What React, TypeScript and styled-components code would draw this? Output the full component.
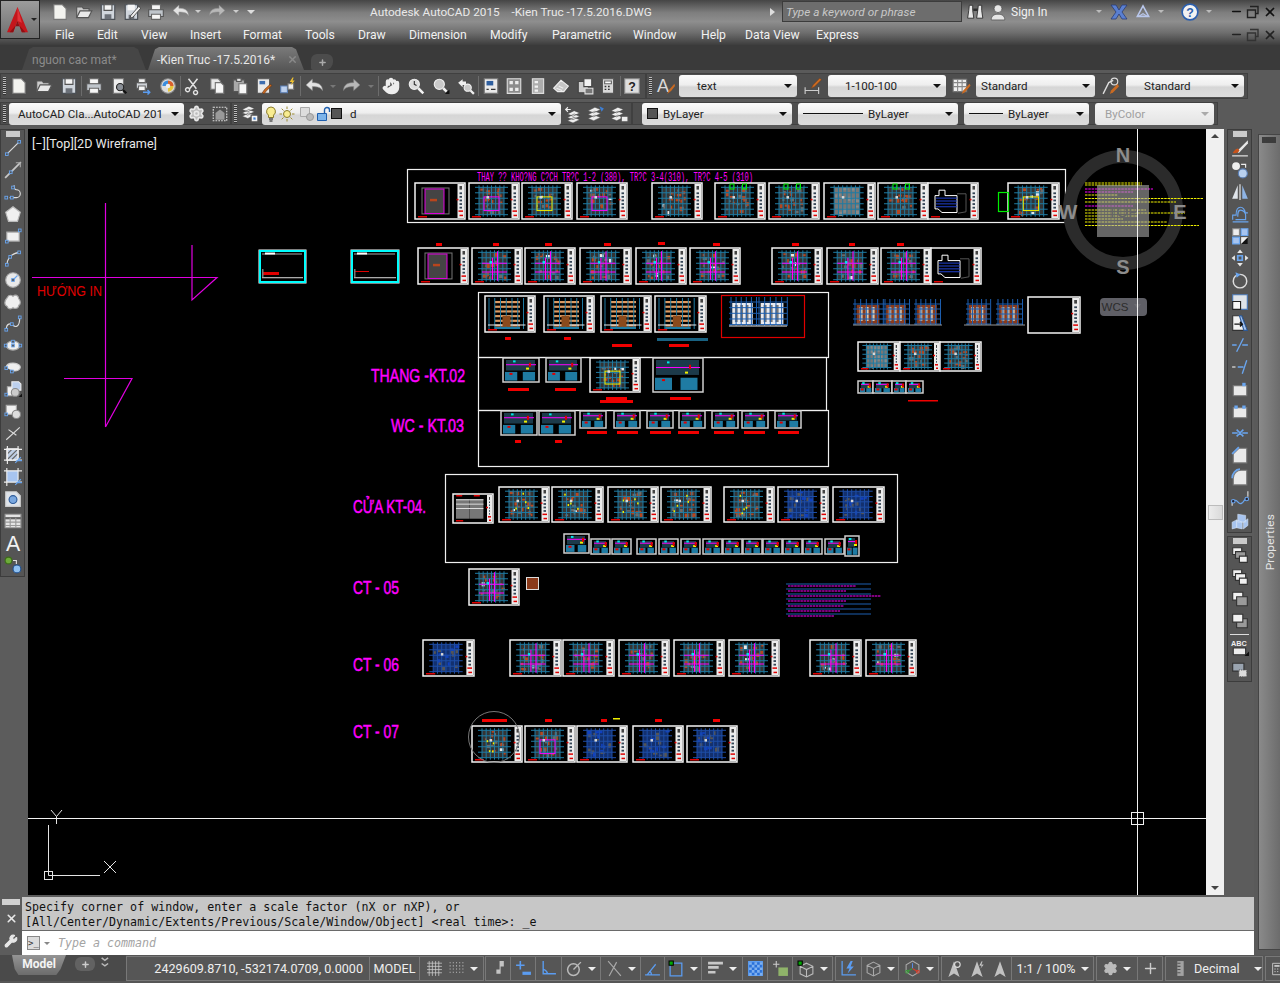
import React from "react";
import styled, { createGlobalStyle } from "styled-components";
import { Hand, X as XIcon, Plus, Settings, Wrench, Minus } from "lucide-react";

const GlobalStyle = createGlobalStyle`
  html, body { margin: 0; padding: 0; background: #555; }
  body { font-family: Roboto, "Liberation Sans", sans-serif; }
`;

const Page = styled.div`
  width: 1280px;
  height: 983px;
  overflow: hidden;
  display: flex;
  flex-direction: column;
  background: #5a5a5a;
  color: #eee;
`;

/* ---------- title bar ---------- */
const Header = styled.header`
  height: 45px;
  display: flex;
  background: linear-gradient(#454545 0%, #7e7e7e 28%, #8e8e8e 48%, #6f6f6f 72%, #3d3d3d 100%);
`;
const AppButton = styled.div`
  width: 40px;
  height: 39px;
  flex: none;
  display: flex;
  align-items: center;
  background: linear-gradient(#9c9c9c, #6f6f6f);
  border: 1px solid #222;
  box-sizing: border-box;
  padding-left: 4px;
  gap: 1px;
`;
const HeaderColumn = styled.div`
  flex: 1;
  display: flex;
  flex-direction: column;
`;
const TitleRow = styled.div`
  height: 23px;
  display: flex;
  align-items: center;
`;
const Qat = styled.div`
  width: 330px;
  padding-left: 8px;
  box-sizing: border-box;
  display: flex;
  align-items: center;
  flex: none;
`;
const QatButton = styled.span<{ $w?: number }>`
  width: ${(p) => p.$w ?? 24}px;
  display: flex;
  justify-content: center;
  flex: none;
`;
const TitleText = styled.div`
  width: 400px;
  flex: none;
  font-size: 11.8px;
  color: #e9e9e9;
  white-space: pre;
`;
const SearchArrow = styled.span`
  width: 12px;
  flex: none;
  display: flex;
  justify-content: flex-start;
  border-left: 5px solid #ddd;
  border-top: 4px solid transparent;
  border-bottom: 4px solid transparent;
  box-sizing: border-box;
  height: 8px;
`;
const SearchBox = styled.div`
  width: 180px;
  height: 21px;
  flex: none;
  box-sizing: border-box;
  border: 1px solid #3c3c3c;
  background: #6d6d6d;
  color: #c8c8c8;
  font: italic 11.8px Roboto, sans-serif;
  padding: 3px 3px;
`;
const SignIn = styled.span`
  font-size: 12px;
  color: #f0f0f0;
  width: 80px;
  flex: none;
`;
const Spacer = styled.span<{ $w: number }>`
  width: ${(p) => p.$w}px;
  flex: none;
`;
const Caret = styled.span<{ $color?: string; $size?: number }>`
  flex: none;
  width: 0;
  height: 0;
  border-left: ${(p) => p.$size ?? 3}px solid transparent;
  border-right: ${(p) => p.$size ?? 3}px solid transparent;
  border-top: ${(p) => p.$size ?? 3}px solid ${(p) => p.$color ?? "#ccc"};
`;
const WindowControls = styled.div`
  display: flex;
  align-items: center;
  justify-content: space-between;
  width: 47px;
  flex: none;
  margin-left: auto;
`;
const MenuRow = styled.nav`
  height: 22px;
  padding-top: 1px;
  box-sizing: border-box;
  display: flex;
  align-items: center;
`;
const MenuItem = styled.span<{ $w: number; $first?: boolean }>`
  width: ${(p) => p.$w}px;
  flex: none;
  font-size: 12.2px;
  color: #f1f1f1;
  margin-left: ${(p) => (p.$first ? 15 : 0)}px;
`;

/* ---------- file tabs ---------- */
const TabBar = styled.div`
  height: 25px;
  background: #3a3a3a;
  display: flex;
  align-items: flex-end;
  padding-left: 22px;
  gap: 2px;
`;
const Tab = styled.div<{ $active?: boolean; $w: number }>`
  width: ${(p) => p.$w}px;
  height: 23px;
  box-sizing: border-box;
  padding-top: 2px;
  clip-path: polygon(0 100%, 7px 10%, 11px 0, calc(100% - 12px) 0, calc(100% - 8px) 10%, 100% 100%);
  display: flex;
  align-items: center;
  padding-left: ${(p) => (p.$active ? 9 : 10)}px;
  font-size: 12px;
  color: ${(p) => (p.$active ? "#e8e8e8" : "#8b8b8b")};
  background: ${(p) => (p.$active ? "linear-gradient(#7a7a7a, #565656)" : "#464646")};
`;
const TabClose = styled.span`
  margin-left: 12px;
  display: flex;
  color: #8a8a8a;
`;
const NewTab = styled.div`
  width: 22px;
  height: 16px;
  margin-left: 5px;
  display: flex;
  align-items: center;
  justify-content: center;
  border-radius: 6px 6px 8px 2px;
  background: #4c4c4c;
  color: #aaa;
`;

/* ---------- toolbars ---------- */
const ToolRow = styled.div<{ $h: number; $pt: number; $pb: number }>`
  height: ${(p) => p.$h}px;
  width: 1280px;
  box-sizing: border-box;
  display: flex;
  align-items: stretch;
  padding: ${(p) => p.$pt}px 0 ${(p) => p.$pb}px 0;
`;
const Toolbar = styled.div<{ $w: number }>`
  width: ${(p) => p.$w}px;
  flex: none;
  display: flex;
  align-items: center;
  background: #4e4e4e;
  border: 1px solid #404040;
  box-sizing: border-box;
`;
const Grip = styled.span`
  width: 3px;
  height: 18px;
  margin: 0 1px 0 2px;
  flex: none;
  background: repeating-linear-gradient(#bbb 0 1px, #333 1px 2px);
`;
const ToolGroup = styled.div<{ $w: number; $plain?: boolean }>`
  width: ${(p) => p.$w}px;
  flex: none;
  height: 20px;
  box-sizing: border-box;
  display: flex;
  align-items: center;
  justify-content: space-around;
  border-right: ${(p) => (p.$plain ? "none" : "1px solid #6c6c6c")};
`;
const Combo = styled.div<{ $w: number; $h?: number; $off?: boolean; $ml?: number; $tight?: boolean }>`
  width: ${(p) => p.$w}px;
  height: ${(p) => p.$h ?? 22}px;
  margin-left: ${(p) => p.$ml ?? 0}px;
  flex: none;
  box-sizing: border-box;
  display: flex;
  align-items: center;
  gap: ${(p) => (p.$tight ? 0 : 5)}px;
  padding: 0 5px 0 ${(p) => (p.$tight ? 1 : 5)}px;
  border-radius: 3px;
  font-size: 11.6px;
  white-space: nowrap;
  overflow: hidden;
  color: ${(p) => (p.$off ? "#a0a0a0" : "#222")};
  background: ${(p) => (p.$off ? "linear-gradient(#f5f5f5, #e4e4e4)" : "linear-gradient(#fbfbfb, #eeeeee 45%, #d6d6d6 55%, #dcdcdc)")};
`;
const ComboLabel = styled.span<{ $pad?: number }>`
  flex: 1;
  overflow: hidden;
  padding-left: ${(p) => p.$pad ?? 0}px;
`;
const ColorSwatch = styled.span`
  width: 9px;
  height: 9px;
  background: #555;
  border: 1px solid #111;
  flex: none;
`;
const LineSample = styled.span<{ $w: number }>`
  width: ${(p) => p.$w}px;
  height: 1px;
  background: #111;
  flex: none;
`;
const IconSlot = styled.span<{ $w: number }>`
  width: ${(p) => p.$w}px;
  flex: none;
  display: flex;
  justify-content: center;
  align-items: center;
`;

/* ---------- work area ---------- */
const Middle = styled.div`
  height: 826px;
  display: flex;
`;
const MainColumn = styled.div`
  width: 1254px;
  flex: none;
  display: flex;
  flex-direction: column;
`;
const Workspace = styled.div`
  height: 766px;
  display: flex;
`;
const SideStrip = styled.aside<{ $w: number; $left?: number }>`
  width: ${(p) => p.$w}px;
  flex: none;
  padding-left: ${(p) => p.$left ?? 0}px;
  box-sizing: border-box;
  background: #5c5c5c;
  display: flex;
  flex-direction: column;
`;
const DockToolbar = styled.div<{ $mt?: number }>`
  width: 25px;
  box-sizing: border-box;
  border: 1px solid #3c3c3c;
  background: #555;
  display: flex;
  flex-direction: column;
  align-items: center;
  margin-top: ${(p) => p.$mt ?? 0}px;
`;
const DockGrip = styled.span`
  width: 14px;
  height: 6px;
  margin: 1px 0 0;
  flex: none;
  background: radial-gradient(circle, #cfcfcf 0.7px, transparent 0.9px) 0 0 / 2px 2px;
`;
const DockButton = styled.span`
  height: 21.95px;
  width: 100%;
  flex: none;
  display: flex;
  align-items: center;
  justify-content: center;
`;
const DockRule = styled.span`
  width: 19px;
  height: 1px;
  margin: 2px 0;
  background: #ddd;
  flex: none;
`;
const CanvasFrame = styled.main`
  position: relative;
  width: 1178px;
  height: 766px;
  flex: none;
  background: #000;
`;
const CanvasSvg = styled.svg`
  display: block;
  width: 100%;
  height: 100%;
`;
const ViewLabel = styled.div`
  position: absolute;
  left: 4px;
  top: 7px;
  font-size: 12.6px;
  color: #e8e8e8;
`;
const Scrollbar = styled.div`
  width: 18px;
  flex: none;
  background: #f0f0f0;
  display: flex;
  flex-direction: column;
  align-items: center;
  justify-content: space-between;
  padding: 5px 0;
  box-sizing: border-box;
`;
const ScrollThumb = styled.span`
  width: 15px;
  height: 15px;
  box-sizing: border-box;
  border: 1px solid #bcbcbc;
  background: linear-gradient(90deg, #ececec, #dadada);
  margin-top: 1px;
`;
const ScrollUp = styled.span`
  width: 0;
  height: 0;
  border-left: 4px solid transparent;
  border-right: 4px solid transparent;
  border-bottom: 4px solid #444;
`;
const ScrollDown = styled(ScrollUp)`
  border-bottom: none;
  border-top: 4px solid #444;
`;
const PaletteBar = styled.div`
  width: 26px;
  flex: none;
  padding: 5px 0 5px 4px;
  box-sizing: border-box;
  background: #5a5a5a;
  display: flex;
`;
const Palette = styled.div`
  flex: 1;
  box-sizing: border-box;
  border: 1px solid #454545;
  border-right: none;
  background: linear-gradient(90deg, #8a8a8a, #6c6c6c);
  display: flex;
  align-items: center;
  justify-content: center;
  position: relative;
`;
const PaletteGrip = styled.span`
  position: absolute;
  top: 2px;
  left: 3px;
  width: 14px;
  height: 6px;
  background: radial-gradient(circle, #3a3a3a 0.7px, transparent 0.9px) 0 0 / 2px 2px;
`;
const PaletteTitle = styled.span`
  writing-mode: vertical-rl;
  transform: rotate(180deg);
  font-size: 11.8px;
  color: #e4e4e4;
  letter-spacing: 0.2px;
`;

/* ---------- command line ---------- */
const CommandLine = styled.section`
  height: 60px;
  display: flex;
  background: #5c5c5c;
  padding-top: 2px;
  box-sizing: border-box;
`;
const CommandRail = styled.div`
  width: 22px;
  flex: none;
  display: flex;
  flex-direction: column;
  align-items: center;
  color: #e8e8e8;
`;
const RailGrip = styled.span`
  width: 18px;
  height: 6px;
  margin-top: 2px;
  background: radial-gradient(circle, #d5d5d5 0.7px, transparent 0.9px) 0 0 / 2px 2px;
`;
const RailButton = styled.span<{ $top: number }>`
  margin-top: ${(p) => p.$top}px;
  display: flex;
`;
const CommandBody = styled.div`
  flex: 1;
  display: flex;
  flex-direction: column;
`;
const CommandHistory = styled.pre`
  margin: 0;
  height: 34px;
  padding: 3px 0 0 3px;
  box-sizing: border-box;
  flex: none;
  background: #c7c7c7;
  border-bottom: 1px solid #6a6a6a;
  font: 11.65px/15px "DejaVu Sans Mono", monospace;
  color: #111;
`;
const CommandInput = styled.div`
  flex: 1;
  background: #fff;
  display: flex;
  align-items: center;
  padding-left: 5px;
  gap: 4px;
`;
const PromptBox = styled.span`
  width: 13px;
  height: 14px;
  box-sizing: border-box;
  border: 1px solid #888;
  background: #dcdcdc;
  color: #333;
  font: 9px/12px "DejaVu Sans Mono", monospace;
  text-align: center;
`;
const CommandPlaceholder = styled.span`
  margin-left: 4px;
  font: italic 11.65px "DejaVu Sans Mono", monospace;
  color: #a4a4a4;
`;

/* ---------- status bar ---------- */
const StatusBar = styled.footer`
  height: 28px;
  display: flex;
  align-items: stretch;
  background: #565656;
  padding-bottom: 2px;
  box-sizing: border-box;
`;
const ModelArea = styled.div`
  width: 126px;
  flex: none;
  display: flex;
  align-items: flex-start;
  background: #4a4a4a;
`;
const ModelTab = styled.div`
  width: 54px;
  height: 20px;
  margin-left: 12px;
  flex: none;
  clip-path: polygon(0 0, 100% 0, 90% 70%, 82% 100%, 12% 100%, 5% 70%);
  background: linear-gradient(#949494, #6c6c6c);
  color: #f4f4f4;
  font-size: 12px;
  font-weight: 700;
  text-align: center;
  line-height: 19px;
`;
const ModelPlus = styled.span`
  width: 20px;
  height: 14px;
  margin: 2px 0 0 9px;
  border-radius: 6px;
  background: #626262;
  display: flex;
  align-items: center;
  justify-content: center;
  color: #ccc;
`;
const ModelMore = styled.span`
  margin: 2px 0 0 5px;
  display: flex;
`;
const StatusGroup = styled.div<{ $ml?: number }>`
  display: flex;
  margin-left: ${(p) => p.$ml ?? 0}px;
  margin-top: 1px;
  border: 1px solid #787878;
  box-sizing: border-box;
`;
const StatusCell = styled.div<{ $w: number; $right?: boolean; $pad?: number; $start?: number }>`
  width: ${(p) => p.$w}px;
  flex: none;
  box-sizing: border-box;
  display: flex;
  align-items: center;
  justify-content: ${(p) => (p.$right ? "flex-end" : p.$start ? "flex-start" : "center")};
  gap: 5px;
  padding-right: ${(p) => p.$pad ?? 0}px;
  padding-left: ${(p) => p.$start ?? 0}px;
  font-size: 12.6px;
  color: #eee;
  white-space: nowrap;
  & + & {
    border-left: 1px solid #787878;
  }
`;
const IconSvg = styled.svg`
  overflow: visible;
  flex: none;
`;

/* ---------- icons ---------- */
const W = "#ededed";
const G = "#b9b9b9";
const B = "#6aa5ee";
const D = "#3a3a3a";
const N = "#5b9cf0";

const dots = (pts: number[][]) =>
  pts.map(([x, y], i) => <rect key={i} x={x - 1.2} y={y - 1.2} width="2.4" height="2.4" fill="#555" stroke={B} strokeWidth=".8" />);

const ICONS: Record<string, React.ReactNode> = {
  new: <path d="M2.5 1.5h7.5l3.5 3.5v9.5h-11z" fill="#f3f3ef" stroke="#777" />,
  open: <><path d="M1.5 13V3.5h5l1 1.5h5V7" fill="#ccc" stroke="#555" /><path d="M1.5 13l3-6h10.5l-3 6z" fill="#e9e9e9" stroke="#555" /></>,
  save: <><path d="M2 1.5h12v13H2z" fill="#cfd5dc" stroke="#4a4f55" /><path d="M4.5 1.5h7v5h-7z" fill="#f5f5f5" stroke="#555" /><path d="M5 10h6v4.5H5z" fill="#6b7078" /></>,
  saveas: <><path d="M2 1.5h11v13H2z" fill="#cfd5dc" stroke="#4a4f55" /><path d="M4 1.5h6.5v5H4z" fill="#f5f5f5" /><path d="M5 10.5h5v4H5z" fill="#6b7078" /><path d="M7 11l7-8 1.8 1.6-7 8-2.6 1z" fill="#eee" stroke="#333" strokeWidth=".7" /></>,
  plot: <><path d="M4 6V1.5h8V6" fill="#f6f6f6" stroke="#666" /><path d="M1.5 6h13v6h-13z" fill="#bfc5cb" stroke="#555" /><path d="M4 10h8v4.5H4z" fill="#f6f6f6" stroke="#666" /></>,
  preview: <><path d="M3 1.5h9v13H3z" fill="#eee" stroke="#777" /><circle cx="9" cy="9" r="3.2" fill="#8a8f96" stroke="#222" /><path d="M11.5 11.5l3 3" stroke="#111" strokeWidth="2" /></>,
  publish: <><path d="M2 5h10v5H2z" fill="#cfd3d8" stroke="#555" /><path d="M4 1.5h6V5H4zM4 8h6v4H4z" fill="#f5f5f5" stroke="#666" /><path d="M8 13.5h6m-2-2l2 2-2 2" stroke={N} fill="none" strokeWidth="1.3" /></>,
  print3d: <><circle cx="8" cy="8" r="6.5" fill="#dcdcdc" stroke="#888" /><path d="M8 3a5 5 0 0 1 5 5H8z" fill="#d8622c" /><path d="M3 8a5 5 0 0 1 5-5v5z" fill="#3a8dde" /><path d="M8 8h5a5 5 0 0 1-5 5z" fill="#e7c53a" /><circle cx="8" cy="8" r="2" fill="#eee" /></>,
  cut: <path d="M4 1.5l7 9M12 1.5l-7 9M4.5 12.5a1.8 1.8 0 1 0-.1.1zM11.5 12.5a1.8 1.8 0 1 0 .1.1z" stroke="#e4e4e4" strokeWidth="1.3" fill="none" />,
  copy: <><path d="M2.5 1.5h6.5l2 2V11h-8.500z" fill="#e8e8e8" stroke="#777" /><path d="M6.500 5h5l2.500 2.500v7h-7.500z" fill="#f7f7f7" stroke="#777" /></>,
  paste: <><path d="M2 2.500h10V13H2z" fill="#a9a9a9" stroke="#555" /><path d="M5 1h4v3H5z" fill="#ddd" stroke="#555" /><path d="M7 6h7v9H7z" fill="#f7f7f7" stroke="#777" /></>,
  match: <><path d="M2 1.500h11v13H2z" fill="#e9e9e9" stroke="#555" /><path d="M4 3.500h5v3H4z" fill="#3d6db0" /><path d="M15 7.500l-5 5-2 2.500-1.500-1 2-3 5-4.500z" fill="#c96a22" stroke="#5a2c10" strokeWidth=".5" /></>,
  blockq: <><path d="M1.500 8h6v6h-6z" fill="#bcd0ee" stroke="#5b7fb5" /><path d="M8 6h5v5H8z" fill="#eee" stroke="#777" /><path d="M12 .5l-2.500 4h2l-1 3 3.500-4.500h-2l1-2.500z" fill="#f0c230" /></>,
  undo: <path d="M1 7l5.500-5v3c5 0 9 1.500 9 7-1-2.500-4-3.500-9-3.500V12z" fill="#e3e3e3" stroke="#999" strokeWidth=".5" />,
  redo: <path d="M15 7L9.500 2v3c-5 0-9 1.500-9 7 1-2.500 4-3.500 9-3.500V12z" fill="#b8b8b8" stroke="#888" strokeWidth=".5" />,
  zoomrt: <><circle cx="6.500" cy="6.500" r="4.500" fill="#ddd" stroke="#eee" /><path d="M6.500 3.500v3l2 1" stroke="#333" fill="none" /><path d="M10 10l4.500 4.500" stroke="#f2f2f2" strokeWidth="2.200" /></>,
  zoomwin: <><circle cx="6.500" cy="6.500" r="4.500" fill="#c9c9c9" stroke="#eee" /><path d="M10 10l3 3" stroke="#f2f2f2" strokeWidth="2.200" /><path d="M11.500 15h4v-4z" fill="#111" /></>,
  zoomprev: <><path d="M1 5l4-3v2h3v3H5v2z" fill="#eee" /><circle cx="9.500" cy="9.500" r="3.200" fill="#c9c9c9" stroke="#eee" /><path d="M12 12l3 3" stroke="#eee" strokeWidth="2" /></>,
  propsp: <><path d="M2 1.500h12v13H2z" fill="#e9e9e9" stroke="#777" /><path d="M4 3.500h6v4H4z" fill="#2e5e9e" /><path d="M4 11h2M8 11h4" stroke="#333" /></>,
  design: <><path d="M2 1.500h12v13H2z" fill="#8c8c8c" stroke="#ddd" /><path d="M4 3.500h3v3H4zM9 3.500h3v3H9zM4 9.500h3v3H4zM9 9.500h3v3H9z" fill="#ececec" /></>,
  palette: <><path d="M3 1.500h10v13H3z" fill="#adadad" stroke="#ddd" /><path d="M5 3.500h3v2H5zM5 7.500h3v2H5zM5 11h3v2H5z" fill="#f1f1f1" /></>,
  sheet: <path d="M1.500 10L8 3l6.500 5-4 5H5zM4 10l5 2M6 8l4 2" fill="#c6c6c6" stroke="#eee" />,
  markup: <><path d="M2 4h9v10H2z" fill="#cfcfcf" stroke="#444" /><path d="M7 1.500h7v7H7z" fill="#f2f2f2" stroke="#444" /><path d="M8 10h7v5H8z" fill="#777" stroke="#ddd" /></>,
  calc: <><path d="M3 1.500h10v13H3z" fill="#d9d9d9" stroke="#555" /><path d="M5 3.500h6v2.500H5z" fill="#fff" stroke="#666" /><path d="M5 8.500h1.500M8 8.500h1.500M5 11h1.500M8 11h1.500" stroke="#333" strokeWidth="1.300" /></>,
  help: <><path d="M1.500 1.500h13v13h-13z" fill="#dedede" stroke="#888" /><text x="8" y="12.500" textAnchor="middle" fontSize="11" fontWeight="700" fontFamily="Liberation Sans" fill="#222">?</text></>,
  textstyle: <><text x="0" y="13" fontSize="16" fontFamily="Liberation Sans" fill="#d9d9d9">A</text><path d="M15.500 6L11 11l-2 4 3.500-2.500L16 8z" fill="#c96a22" /></>,
  dimstyle: <><path d="M1 9v6M13 9v6M1 12h12" stroke="#ccc" /><path d="M14 1l-6 6-1.500 3 3-1.500 6-6z" fill="#c96a22" stroke="#7a3b12" strokeWidth=".4" /></>,
  tablestyle: <><path d="M1 2h12v11H1z" fill="#eee" stroke="#777" /><path d="M1 5h12M1 8.500h12M5 2v11M9 2v11" stroke="#888" /><path d="M15.500 6L10 12l-1.500 3 3-1.500 5-6z" fill="#c96a22" /></>,
  mlstyle: <><path d="M1 15l5-10 4-2" stroke="#ddd" fill="none" strokeWidth="1.200" /><circle cx="11" cy="4" r="3" fill="none" stroke="#ddd" /><path d="M14 6l-6 6-1 3 3-1.500 5-5z" fill="#c96a22" /></>,
  wslock: <><path d="M2 2h12v12H2z" fill="none" stroke="#ddd" strokeDasharray="1.500 1" /><path d="M4 13V7l4-3 4 3v6z" fill="#9a9a9a" /></>,
  layerprop: <><path d="M1 7l6-3 5 2-6 3zM1 10l6-3 5 2-6 3zM1 4l6-3 5 2-6 3z" fill="#eee" stroke="#444" strokeWidth=".5" /><path d="M9 9h6v6H9z" fill="#f2f2f2" stroke="#555" /><path d="M11 11h2v2h-2z" fill="#3d7fd6" /></>,
  bulb: <><path d="M8 1a4.500 4.500 0 0 0-2.500 8.200V11.500h5V9.200A4.500 4.500 0 0 0 8 1z" fill="#f8ec90" stroke="#8a7c2c" /><path d="M6 13h4M6.500 15h3" stroke="#555" strokeWidth="1.300" /></>,
  sun: <><circle cx="8" cy="8" r="3.500" fill="#f8ec90" stroke="#8a7c2c" /><path d="M8 .5v2.500M8 13v2.500M.5 8H3M13 8h2.500M2.700 2.700l1.800 1.800M11.500 11.500l1.800 1.800M13.300 2.700l-1.800 1.800M4.500 11.500l-1.800 1.800" stroke="#9c8c30" /></>,
  vpfreeze: <><path d="M1.500 1.500h9v9h-9z" fill="#ddd" stroke="#aaa" /><circle cx="11" cy="11" r="3.500" fill="#bbb" stroke="#999" /></>,
  lockopen: <><path d="M2.500 7.500h9v7h-9z" fill="#7db4ea" stroke="#1f5fae" /><path d="M9.500 7V4a2.500 2.500 0 0 1 5 0v2" fill="none" stroke="#1f5fae" strokeWidth="1.400" /></>,
  layerstate: <><path d="M1 5l6-3 5 2-6 3zM1 8.500l6-3 5 2-6 3zM1 12l6-3 5 2-6 3z" fill="#eee" stroke="#555" strokeWidth=".5" /><path d="M11 1l4 2-2 3z" fill="#3d7fd6" /></>,
  layerprev: <><path d="M3 8l6-3 5 2-6 3zM3 11l6-3 5 2-6 3zM3 14l6-3 5 2-6 3z" fill="#eee" stroke="#444" strokeWidth=".5" /><path d="M6 4H2m1.500-2L1.500 4l2 2" stroke="#eee" fill="none" /></>,
  layermatch: <><path d="M1 5l6-3 5 2-6 3zM1 8.500l6-3 5 2-6 3zM1 12l6-3 5 2-6 3z" fill="#eee" stroke="#444" strokeWidth=".5" /><path d="M10 10h6v5h-6z" fill="#eee" stroke="#555" /></>,
  /* left dock */
  line: <><path d="M2.500 13.500l11-11" stroke="#dcdcdc" />{dots([[2.500, 13.500], [13.500, 2.500]])}</>,
  xline: <><path d="M1 15L15 1" stroke="#c8c8c8" strokeWidth="1.500" />{dots([[6, 10]])}<path d="M14.500 1.500v4m0-4h-4" stroke="#aaa" /></>,
  pline: <><path d="M2 13h6a3.500 3.500 0 0 0 0-7c-2 0-2-2-2-4" fill="none" stroke="#dcdcdc" transform="translate(3 0)" />{dots([[2, 13], [7, 13], [8, 4]])}</>,
  polygon: <path d="M8 1.500l6.500 5-2.500 8H4l-2.500-8z" fill="#f0f0f0" stroke="#bbb" />,
  rect: <><path d="M2.500 4.500h11v8h-11z" fill="#f0f0f0" stroke="#aaa" />{dots([[2.500, 13], [14, 3]])}</>,
  arc: <><path d="M2.500 14C3 8 7 4 13.500 3" fill="none" stroke="#dcdcdc" />{dots([[2.500, 14], [5.500, 7], [13.500, 3]])}</>,
  circle: <><circle cx="8" cy="8" r="6.500" fill="#e9e9e9" stroke="#aaa" /><path d="M8 8l4-4" stroke={B} />{dots([[8, 8]])}</>,
  cloud: <path d="M3 4c1-3 4-2 5-1 2-2 5-1 5 2 2 2 2 5 0 6 0 3-4 3-5 2-2 2-5 1-5-1-3-1-3-5 0-8z" fill="#f0f0f0" stroke="#aaa" />,
  spline: <><path d="M2 14c0-6 4-6 6-4s6 2 6-7" fill="none" stroke="#dcdcdc" />{dots([[2, 14], [7, 9], [14, 3]])}</>,
  ellipse: <><ellipse cx="8" cy="8.500" rx="6" ry="4" fill="#eee" stroke="#aaa" />{dots([[1.500, 8.500], [8, 5], [14.500, 8.500], [8, 8.500]])}</>,
  ellarc: <><path d="M2 8.500c0-3.500 4-4 6-4s6.500 1 6.500 3.500-3 3.500-5 3.500-3-.5-4-1" fill="#eee" stroke="#ccc" />{dots([[2, 9], [7, 12]])}</>,
  insert: <><path d="M3 6h8v8H3z" fill="#f2f2f2" stroke="#aaa" /><path d="M7 1.500h6l2 2V9H7z" fill="#bcd0ee" stroke="#eee" /><circle cx="10" cy="11" r="3.500" fill="#ccc" stroke="#888" /><path d="M13 15h3v-3z" fill="#111" />{dots([[2, 13]])}</>,
  makeblock: <><path d="M2 3h9v8H2z" fill="#f0f0f0" stroke="#aaa" /><circle cx="11" cy="11" r="3.700" fill="#ddd" stroke="#888" />{dots([[2, 11]])}</>,
  point: <path d="M2 14L14 3M4 5l7 5" stroke="#dcdcdc" />,
  hatch: <><path d="M2.500 2.500h10v10h-10z" fill="#bfcfe6" stroke="#eee" /><path d="M3 7l4-4M3 12l9-9M7 12l5-5" stroke="#666" /><path d="M0 3h16M3 0v16M0 12.500h16M12.500 0v11" stroke="#eee" /><path d="M10 15l5-5M11 13h5" stroke={B} /></>,
  gradient: <><path d="M2.500 2.500h10v10h-10z" fill="#a7c4ef" /><path d="M0 2.500h16M2.500 0v16M0 12.500h16M12.500 0v11" stroke="#eee" /><path d="M10 15l5-5M11 13h5" stroke={B} /></>,
  region: <><path d="M1.500 1.500H11l3.500 3.500v9.500h-13z" fill="#dfe4ea" stroke="#ccc" /><circle cx="8" cy="8.500" r="3.500" fill="#7aa8e0" stroke="#2d5b9a" /></>,
  table: <><path d="M1 2h14v12H1z" fill="#e4e4e4" stroke="#999" /><path d="M1 5.500h14" stroke="#666" strokeWidth="2" /><path d="M1 9h14M1 12h14M5.500 5v9M10.500 5v9" stroke="#999" /></>,
  mtext: <text x="8" y="15" textAnchor="middle" fontSize="19" fontFamily="Liberation Sans" fill="#f2f2f2">A</text>,
  addsel: <><circle cx="4" cy="4" r="3" fill="#6dab3a" stroke="#3e6c1a" /><path d="M8 4h3v3" stroke="#ddd" fill="none" /><circle cx="11.500" cy="11.500" r="3.500" fill="#8fc0f0" stroke="#1f4f8e" /></>,
  /* right dock */
  erase: <><path d="M15 1L7 9l-2 2 2 1.500L15 4z" fill="#e7e7e7" /><path d="M6 8.500c-2 0-3 2-4.500 4 3 .5 5 0 6-2.500z" fill="#c9531a" /><path d="M1 15h14" stroke="#eee" /></>,
  copyobj: <><circle cx="4.500" cy="4.500" r="3.500" fill="#eee" /><circle cx="10.500" cy="11" r="4" fill="#b9d0ee" stroke="#5b7fb5" /><path d="M9 3h4v3" stroke="#eee" fill="none" /></>,
  mirror: <><path d="M1 14l5-12v12z" fill="#dfe4ea" /><path d="M15 14L10 2v12z" fill="#8fb4e4" /><path d="M8 1v14" stroke="#eee" /></>,
  offset: <path d="M1.500 13V9h3c0-5 2-7 4-7s4 2 4 5h2.500M1.500 15h14M4 13h9V9c0-2-2-4.500-4.500-4.500S6 7 6 10.500" fill="none" stroke={B} />,
  array: <><path d="M1.500 1.500h6v6h-6z" fill="#eee" stroke="#888" /><path d="M9 1.500h6v6H9zM1.500 9h6v6h-6z" fill="#a7c4ef" stroke={B} /><path d="M9 9h6v6H9z" fill="#eee" /><path d="M9 15l6-6v6z" fill="#111" /></>,
  move: <><path d="M8 .5l2.500 3h-5zM8 15.500l2.500-3h-5zM.5 8l3-2.500v5zM15.500 8l-3-2.500v5z" fill="#e7e7e7" /><path d="M6 6h4v4H6z" fill="none" stroke={B} strokeWidth="1.500" /></>,
  rotate: <><circle cx="8" cy="9" r="6" fill="none" stroke="#ddd" strokeWidth="1.300" /><path d="M4 1l4.500 2L5 6z" fill={B} /></>,
  scale: <><path d="M1.500 1.500h13v13h-13z" fill="#dfe4ea" stroke="#4a77b5" /><path d="M1.500 7.500h7v7h-7z" fill="#f7f7f7" stroke="#222" /></>,
  stretch: <><path d="M1.500 1.500h8l5 13h-13z" fill="#f1f1f1" stroke="#333" /><path d="M9.500 1.500l5 13-3 0-4-13z" fill="#a7c4ef" stroke="#2d5b9a" /><path d="M3 9h7m-2-2l2 2-2 2" stroke="#111" fill="none" strokeWidth="1.300" /></>,
  trim: <path d="M1 8h4M10 8h5M11 2L5 14" stroke={B} fill="none" strokeWidth="1.200" />,
  extend: <><path d="M1 8h3" stroke="#eee" /><path d="M6 8h5M14 2L10 14" stroke={B} fill="none" strokeWidth="1.200" /></>,
  breakp: <><path d="M2 5h12v9H2z" fill="#e9e9e9" stroke="#777" /><path d="M10 2.500h3v3h-3z" fill={B} /></>,
  breakat: <><path d="M2 5h12v9H2z" fill="#e9e9e9" stroke="#777" /><path d="M3 3h3v3H3zM10 3h3v3h-3z" fill={B} /></>,
  join: <path d="M1 8h5M10 8h5M5 5l3 3-3 3M11 5L8 8l3 3" stroke={B} strokeWidth="1.400" fill="none" />,
  chamfer: <><path d="M2 15V7l5-5h7v13z" fill="#e9e9e9" stroke="#777" /><path d="M1 7l6-6" stroke={B} strokeWidth="1.500" /></>,
  fillet: <><path d="M2 15V9c0-4 3-7 7-7h5v13z" fill="#e9e9e9" stroke="#777" /><path d="M1 9c0-4 3-8 7-8" stroke={B} strokeWidth="1.500" fill="none" /></>,
  blend: <><path d="M1 14V9M15 6V1" stroke="#ddd" /><path d="M2 11c3-5 4 2 7 1s2-4 5-4" stroke={B} strokeWidth="1.200" fill="none" /><circle cx="2" cy="10" r="1.600" fill="#223" stroke={B} /><circle cx="14" cy="8" r="1.600" fill="#223" stroke={B} /></>,
  explode: <><path d="M1 9l4-2v7l-4 1zM6 2l7 1v6l-7 0zM5 7l5 2v6l-5-1zM11 9l4-3v6l-4 3z" fill="#a7c4ef" stroke="#d8e6f7" strokeWidth=".5" /></>,
  ord1: <><path d="M1.500 1.500h8v6h-8z" fill="#f1f1f1" stroke="#333" /><path d="M4 5h9v6H4z" fill="#9a9a9a" stroke="#333" /><path d="M7.500 9h7v5.500h-7z" fill="#f1f1f1" stroke="#333" /></>,
  ord2: <><path d="M1.500 1.500h8v6h-8z" fill="#f1f1f1" stroke="#333" /><path d="M4 5h9v6H4z" fill="#f1f1f1" stroke="#333" /><path d="M7.500 9h7v5.500h-7z" fill="#f1f1f1" stroke="#333" /></>,
  ord3: <><path d="M1.500 2h9v7h-9z" fill="#f1f1f1" stroke="#333" /><path d="M5 6h9.500v8H5z" fill="#9a9a9a" stroke="#333" /></>,
  ord4: <><path d="M5 6h9.500v8H5z" fill="#9a9a9a" stroke="#333" /><path d="M1.500 2h9v7h-9z" fill="#f1f1f1" stroke="#333" /></>,
  textfront: <><text x="0" y="6.500" fontSize="6.500" fontWeight="700" fontFamily="Liberation Sans" fill="#eee">ABC</text><path d="M2 8h11v6H2z" fill="#eee" stroke="#333" /><path d="M12 15h4v-4z" fill="#111" /></>,
  hatchback: <><path d="M1.500 2h10v7h-10z" fill="#9aa4b0" stroke="#333" /><path d="M7 8h7v6H7z" fill="#ddd" stroke="#555" strokeDasharray="1 1" /></>,
  /* status bar */
  grid: <path d="M3 1v14M6 1v14M9 1v14M12 1v14M1 3h14M1 6h14M1 9h14M1 12h14" stroke="#cfcfcf" strokeWidth=".7" />,
  snap: <path d="M2 2v12M5 2v12M8 2v12M11 2v12M14 2v12" stroke="#bdbdbd" strokeDasharray="1 2" />,
  infer: <path d="M9 1h4v5h-3v7H6v-4h3z" fill="#c4c4c4" />,
  dyn: <><path d="M1 5h8M5 1v8" stroke={N} strokeWidth="1.500" /><path d="M7 11h8v3H7z" fill={N} /></>,
  ortho: <path d="M3 1v12h12M3 9c2 0 4 2 4 4" stroke={N} fill="none" strokeWidth="1.300" />,
  polar: <><circle cx="7" cy="9" r="5.500" fill="none" stroke="#bbb" strokeWidth="1.400" /><path d="M7 9l7-7" stroke="#bbb" strokeWidth="1.300" /></>,
  iso: <path d="M2 1l12 14M10 2L3 15" stroke="#a8a8a8" strokeWidth="1.100" />,
  isotrack: <path d="M1 14h14M11 4L3 14M7 14c0-2-1-3-2-3" stroke={N} strokeWidth="1.200" fill="none" />,
  osnap: <><path d="M2 3h11v12H2z" fill="none" stroke={N} strokeWidth="1.200" /><path d="M1 1h4v4H1z" fill="#0a0" stroke="#000" /></>,
  lweight: <path d="M1 3h14M1 7h10M1 11.500h7" stroke="#c8c8c8" strokeWidth="2.500" />,
  transp: <><path d="M1.500 1.500h13v13h-13z" fill="#2a70d8" stroke={N} /><path d="M2 2h2.500v2.500H2zM7 2h2.500v2.500H7zM12 2h2.500v2.500H12zM4.500 4.500H7V7H4.500zM9.500 4.500H12V7H9.500zM2 7h2.500v2.500H2zM7 7h2.500v2.500H7zM12 7h2.500v2.500H12zM4.500 9.500H7V12H4.500zM9.500 9.500H12V12H9.500zM2 12h2.500v2.500H2zM7 12h2.500v2.500H7zM12 12h2.500v2.500H12z" fill="#7fb0ee" /></>,
  cycle: <><path d="M1 4h6M4 1v6" stroke="#ccc" /><path d="M6 7h9v8H6z" fill="#8fb36a" /></>,
  snap3d: <><path d="M8 3l6 3v7l-6 3-6-3V6zM2 6l6 3 6-3M8 9v7" fill="none" stroke="#bcbcbc" /><path d="M0 1h4v4H0z" fill="#0a0" stroke="#000" /></>,
  ducs: <><path d="M2 1v13h13" stroke={N} fill="none" strokeWidth="1.200" /><path d="M10 1L6 8h3l-2 5 6-7h-3l2-5z" fill={N} /></>,
  cube: <path d="M8 2l6 3v7l-6 3-6-3V5zM2 5l6 3 6-3M8 8v7" fill="none" stroke="#a9a9a9" />,
  gizmo: <><path d="M8 1l6 3.500v7L8 15l-6-3.500v-7z" fill="none" stroke="#aaa" /><path d="M8 8V3" stroke="#5b8de0" /><path d="M8 8l-5 3" stroke="#3a9a3a" /><path d="M8 8l5 3" stroke="#d04030" /><circle cx="3" cy="11" r="1.400" fill="none" stroke="#3a9a3a" /><circle cx="13" cy="11" r="1.400" fill="none" stroke="#d04030" /></>,
  annoA: <><path d="M8 1L3 15l5-3 5 3z" fill="#c2c2c2" /><circle cx="11" cy="4" r="2.500" fill="#555" stroke="#ddd" /></>,
  annoB: <><path d="M8 1L3 15l5-3 5 3z" fill="#c2c2c2" /><path d="M12 1l-2 4h2l-1 3 3-4h-2l1-3z" fill="#ddd" stroke="#555" strokeWidth=".3" /></>,
  annoC: <path d="M8 1L3 15l5-3 5 3z" fill="#c2c2c2" />,
  ruler: <><path d="M5 1h6v14H5z" fill="#a2a2a2" /><path d="M5 3h3M5 6h3M5 9h3M5 12h3" stroke="#555" /></>,
  calcsm: <><path d="M3 1.500h10v13H3z" fill="none" stroke="#ccc" /><path d="M5 3.500h6v2H5z" fill="#ccc" /><path d="M5 8h1.500M8 8h1.500M5 11h1.500M8 11h1.500" stroke="#ccc" /></>,
  chevrons: <path d="M2 1l4 3 4-3M2 8l4 3 4-3" fill="none" stroke="#bbb" strokeWidth="1.800" />,
};

const Icon = ({ name, size = 18 }: { name: string; size?: number }) => (
  <IconSvg width={size} height={size} viewBox="0 0 16 16">{ICONS[name]}</IconSvg>
);

/* ---------- drawing content ---------- */
const rng = (seed: number) => {
  let s = Math.abs(Math.round(seed * 97)) % 233280;
  return () => {
    s = (s * 9301 + 49297) % 233280;
    return s / 233280;
  };
};

type Tone = "orange" | "magenta" | "blue" | "grey" | "green" | "pale" | "mix" | "empty" | "section" | "stair" | "tile" | "door" | "gate";

const TEAL = "#1f7ba3";
const ORANGE = "#b8451d";

const Sheet = ({ x0, x1, y0, y1, tone = "mix" }: { x0: number; x1: number; y0: number; y1: number; tone?: Tone }) => {
  const w = x1 - x0;
  const h = y1 - y0;
  const r = rng(x0 + y0 * 3);
  const tb = Math.max(w * 0.15, 3);
  const tbx = x1 - tb;
  const bx = x0 + w * 0.2;
  const bw = w * 0.5;
  const by = y0 + h * 0.12;
  const bh = h * 0.76;
  const blocks = Array.from({ length: 16 }, () => [bx + r() * bw * 0.9, by + r() * bh * 0.9, 1.5 + r() * 3, 1.5 + r() * 3, r()]);
  const isPlan = !["empty", "section", "stair", "tile", "door", "gate"].includes(tone);
  const lineColor = tone === "blue" ? "#1e4ea8" : TEAL;
  return (
    <g>
      <rect x={x0} y={y0} width={w} height={h} fill="#000" stroke={tone === "tile" ? "#cfcfcf" : "#f4f4f4"} strokeWidth="1.500" />
      {tone !== "tile" && (
        <g>
          <rect x={tbx} y={y0 + 1} width={tb - 1} height={h - 2} fill="#ececec" />
          <rect x={tbx + 2} y={y0 + 3} width={tb - 5} height={h * 0.1} fill="#444" />
          {[0.26, 0.36, 0.46, 0.56, 0.66].map((f) => (
            <rect key={f} x={tbx + 2} y={y0 + h * f} width={tb - 5} height={h * 0.05} fill="#345" />
          ))}
          <rect x={tbx + 1} y={y0 + h * 0.76} width={tb - 3} height="1.500" fill="#e00000" />
          <rect x={tbx + 2} y={y0 + h * 0.88} width={tb - 4} height="1.500" fill="#e00000" />
          <rect x={tbx - 1} y={y0 + h * 0.44} width="2" height="1.500" fill="#e00000" />
        </g>
      )}
      {isPlan && (
        <g>
          <rect x={bx} y={by} width={bw} height={bh} fill={tone === "grey" ? "#777" : tone === "blue" ? "#13306e" : "#343434"} />
          {blocks.map(([a, b, c, d, e], i) => (
            <rect key={i} x={a} y={b} width={c} height={d} fill={tone === "blue" ? (e > 0.5 ? "#1040c0" : "#555") : tone === "grey" ? "#888" : e > 0.7 ? "#6a6a6a" : e > 0.06 ? ORANGE : "#e8e8e8"} />
          ))}
          {[0, 1, 2, 3, 4, 5, 6].map((i) => (
            <line key={i} x1={bx + (i * bw) / 6} x2={bx + (i * bw) / 6} y1={by - 2} y2={by + bh + 2} stroke={lineColor} strokeWidth="1" />
          ))}
          {[0, 1, 2, 3, 4, 5].map((i) => (
            <line key={i} x1={bx - 4} x2={bx + bw + 4} y1={by + (i * bh) / 5} y2={by + (i * bh) / 5} stroke={lineColor} strokeWidth="1" />
          ))}
          {tone === "magenta" && (
            <path d={`M${bx + bw * 0.62} ${by - 1}V${by + bh + 1}M${bx + bw * 0.42} ${by + bh * 0.2}V${by + bh}M${bx} ${by + bh * 0.4}H${bx + bw}M${bx} ${by + bh * 0.72}H${bx + bw}`} stroke="#ff00ff" strokeWidth="1.100" fill="none" />
          )}
          {tone === "green" && (
            <g stroke="#00ee00" strokeWidth="1" fill="none">
              <rect x={bx + bw * 0.2} y={y0 + 1} width="4" height="5" />
              <rect x={bx + bw * 0.7} y={y0 + 1} width="4" height="5" />
            </g>
          )}
          {tone === "mix" && <rect x={bx + bw * 0.2} y={by + bh * 0.35} width={bw * 0.6} height={bh * 0.5} fill="none" stroke={x0 % 2 ? "#ff00ff" : "#f0f000"} strokeWidth="1" />}
          {tone === "pale" && [0, 1, 2, 3].map((i) => <rect key={i} x={bx + r() * bw * 0.8} y={by + r() * bh * 0.8} width="1.500" height="2" fill="#f0f000" />)}
          <rect x={bx + bw * 0.3} y={by + bh * 0.32} width="2.500" height="2.500" fill={tone === "magenta" ? "#00e8e8" : "#d8d8d8"} />
        </g>
      )}
      {tone === "gate" && (
        <g>
          <rect x={x0 + 7} y={y0 + 5} width={w * 0.54} height={h * 0.72} fill="none" stroke="#777" />
          <rect x={x0 + w * 0.2} y={y0 + 6} width={w * 0.38} height={h * 0.68} fill="#444" stroke="#e000e0" />
          <rect x={x0 + w * 0.3} y={y0 + h * 0.44} width={w * 0.14} height="2.500" fill="#b8451d" />
        </g>
      )}
      {tone === "section" && (
        <g>
          {[0, 1, 2, 3, 4, 5].map((i) => (
            <rect key={i} x={x0 + w * 0.2} y={y0 + 5 + i * (h * 0.13)} width={w * 0.5} height={h * 0.06} fill="#dc9a62" />
          ))}
          {[0, 1, 2, 3, 4, 5, 6].map((i) => (
            <line key={i} x1={x0 + 4 + i * (w * 0.115)} x2={x0 + 4 + i * (w * 0.115)} y1={y0 + 2} y2={y1 - 3} stroke={TEAL} />
          ))}
          <line x1={x0 + 3} x2={tbx - 2} y1={y1 - 7} y2={y1 - 7} stroke="#e8e8e8" />
          <rect x={x0 + w * 0.2} y={y1 - 5} width={w * 0.5} height="2" fill={TEAL} />
          <rect x={x0 + w * 0.35} y={y0 + h * 0.55} width={w * 0.16} height={h * 0.3} fill="#8a4a1c" />
        </g>
      )}
      {tone === "stair" && (
        <g>
          <path d={`M${x0 + 7} ${y0 + h * 0.35}H${x0 + w * 0.22}V${y0 + h * 0.2}H${x0 + w * 0.34}V${y0 + h * 0.35}H${x0 + w * 0.58}V${y0 + h * 0.82}H${x0 + w * 0.28}L${x0 + w * 0.2} ${y0 + h * 0.72}H${x0 + 7}z`} fill="none" stroke="#fff" strokeWidth="1" />
          {[0.42, 0.5, 0.58, 0.66].map((f) => (
            <line key={f} x1={x0 + 8} x2={x0 + w * 0.58} y1={y0 + h * f} y2={y0 + h * f} stroke="#2040d0" />
          ))}
          <path d={`M${x0 + w * 0.58} ${y0 + h * 0.3}H${x0 + w * 0.76}V${y0 + h * 0.8}L${x0 + w * 0.6} ${y0 + h * 0.84}`} fill="none" stroke="#555" />
        </g>
      )}
      {tone === "door" && (
        <g>
          <rect x={x0 + 3} y={y0 + 5} width={w * 0.34} height={h * 0.68} fill="#777" />
          <rect x={x0 + w * 0.42} y={y0 + 5} width={w * 0.34} height={h * 0.68} fill="#777" />
          {[0.2, 0.35, 0.5].map((f) => (
            <line key={f} x1={x0 + 3} x2={x0 + w * 0.76} y1={y0 + h * f} y2={y0 + h * f} stroke="#ddd" />
          ))}
          <rect x={x0 + w * 0.08} y={y0 + 1} width="6" height="1.500" fill="#e00000" />
          <rect x={x0 + w * 0.52} y={y0 + 1} width="6" height="1.500" fill="#e00000" />
        </g>
      )}
      {tone === "tile" && (
        <g>
          <rect x={x0 + 2} y={y0 + h * 0.58} width={w * 0.34} height={h * 0.36} fill={TEAL} />
          <rect x={x0 + w * 0.55} y={y0 + h * 0.58} width={w * 0.34} height={h * 0.36} fill={TEAL} />
          <rect x={x0 + 3} y={y0 + 2} width={w - 7} height={h * 0.44} fill="#1c3a4a" />
          <line x1={x0 + 3} x2={x1 - 3} y1={y0 + h * 0.28} y2={y0 + h * 0.28} stroke="#ff00ff" />
          <rect x={x0 + w * 0.28} y={y0 + h * 0.1} width="2.500" height="2" fill="#00e8e8" />
          <rect x={x0 + w * 0.64} y={y0 + h * 0.4} width="3" height="2" fill="#f0f000" />
          <rect x={x0 + w * 0.18} y={y0 + h * 0.62} width="3" height="2" fill="#e00000" />
          <rect x={x0 + w * 0.72} y={y0 + h * 0.2} width="2" height="4" fill="#e00000" />
        </g>
      )}
      {tone !== "tile" && tone !== "empty" && <rect x={x0 + 3} y={y1 - 3} width={w * 0.18} height="1.500" fill="#e00000" />}
    </g>
  );
};

const Elevation = ({ x, y, w, h, light }: { x: number; y: number; w: number; h: number; light?: boolean }) => (
  <g>
    <rect x={x + w * 0.12} y={y + 3} width={w * 0.76} height={h - 4} fill={light ? "#e8eaf0" : "#8a3a1a"} />
    {[0.22, 0.42, 0.62].map((f) => (
      <rect key={f} x={x + w * f} y={y + 5} width={w * 0.1} height={h - 9} fill={light ? "#777" : "#d8c8b0"} />
    ))}
    {[0, 1, 2, 3, 4].map((i) => (
      <line key={i} x1={x} x2={x + w} y1={y + 2 + i * (h / 4.600)} y2={y + 2 + i * (h / 4.600)} stroke="#1d5fb0" />
    ))}
    {[0, 1, 2, 3, 4, 5].map((i) => (
      <line key={i} x1={x + 2 + i * (w / 5.300)} x2={x + 2 + i * (w / 5.300)} y1={y - 3} y2={y + h} stroke="#1d5fb0" />
    ))}
  </g>
);

const sheetsOf = (y0: number, y1: number, spans: [number, number, Tone?][]) =>
  spans.map(([x0, x1, tone]) => <Sheet key={`${x0}-${y0}`} x0={x0} x1={x1} y0={y0} y1={y1} tone={tone} />);

const RED_MARKS: [number, number, number, number][] = [
  [436, 442, 243, 3], [493, 499, 243, 3], [545, 552, 243, 3], [604, 611, 243, 3], [658, 665, 242, 3],
  [713, 720, 243, 3], [792, 799, 243, 3], [849, 855, 243, 3], [897, 904, 243, 3],
  [505, 511, 337, 3], [564, 571, 337, 3], [612, 632, 344, 3], [669, 689, 344, 3],
  [908, 938, 400, 1.500],
  [508, 529, 388, 3], [555, 576, 388, 3], [606, 627, 397, 3], [600, 633, 400, 3], [670, 691, 397, 3],
  [515, 521, 440, 3], [555, 562, 440, 3], [587, 607, 431, 3], [617, 638, 431, 3], [650, 671, 431, 3],
  [678, 699, 431, 3], [714, 734, 431, 3], [744, 765, 431, 3], [778, 799, 431, 3],
  [482, 507, 719, 3], [545, 552, 719, 3], [601, 607, 719, 3], [655, 662, 719, 3], [713, 720, 719, 3],
];

const NOTE_LINES: [number, number, string][] = [
  [183, 1142, "#f0f000"], [185, 1142, "#f0f000"], [189, 1153, "#ff00ff"], [192, 1133, "#ff00ff"], [195, 1118, "#f0f000"],
  [198.500, 1203, "#f0f000"], [202, 1176, "#f0f000"], [206, 1133, "#ff00ff"], [210, 1146, "#f0f000"], [213, 1185, "#f0f000"],
  [216, 1137, "#f0f000"], [219, 1123, "#f0f000"], [222, 1167, "#f0f000"], [225.500, 1199, "#f0f000"],
];

const CadDrawing = () => (
  <CanvasSvg viewBox="28 129 1178 766">
    {/* print direction marks */}
    <g stroke="#e000e0" strokeWidth="1.200" fill="none">
      <path d="M105.500 203V427M32 277.500H217L192 300V245M64 378.500H132L105.500 427" />
    </g>
    <text x="37" y="296" fontSize="14" fontFamily="Liberation Sans" fill="#e00000" textLength="65" lengthAdjust="spacingAndGlyphs">HƯỚNG IN</text>

    {/* cover sheets */}
    {[[259, 306], [351, 399]].map(([a, b], i) => (
      <g key={a}>
        <rect x={a} y="250" width={b - a} height="33" fill="#000" stroke="#fff" strokeWidth="1" />
        <rect x={a + 1} y="251" width={b - a - 2} height="31" fill="#000" stroke="#00ffff" strokeWidth="2" />
        <rect x={a + 3} y="253" width={b - a - 7} height="2" fill="#555" />
        <rect x={a + 6} y="252.500" width="10" height="2" fill="#fff" />
        <rect x={a + 3} y="277" width={b - a - 6} height="1.300" fill="#aaa" />
        <rect x={a + 4} y={i ? 271 : 272} width={i ? 14 : 16} height={i ? 1 : 3} fill="#e00000" />
        <rect x={a + 3} y="269" width="1.500" height="8" fill="#777" />
      </g>
    ))}

    {/* frames */}
    <g fill="none" stroke="#f0f0f0" strokeWidth="1.200">
      <rect x="407.500" y="169.500" width="658" height="53" />
      <rect x="478.500" y="292.500" width="350" height="65" />
      <rect x="478.500" y="357.500" width="348" height="53" />
      <rect x="478.500" y="410.500" width="350" height="56" />
      <rect x="445.500" y="474.500" width="452" height="88" />
    </g>
    <text x="477" y="180.500" fontSize="13" fontFamily="Liberation Mono" fill="#ff00ff" textLength="276" lengthAdjust="spacingAndGlyphs">THAY ?? KHO?NG C?CH TR?C 1-2 (380), TR?C 3-4(310), TR?C 4-5 (310)</text>

    {sheetsOf(183, 219, [
      [415, 465, "gate"], [469, 519, "mix"], [522, 572, "mix"], [577, 627, "mix"], [652, 702, "orange"],
      [715, 765, "green"], [769, 819, "green"], [824, 875, "grey"], [878, 928, "green"], [928, 978, "stair"], [1008, 1059, "mix"],
    ])}
    <rect x="998.500" y="192.500" width="10" height="19" fill="none" stroke="#00ee00" strokeWidth="1.200" />

    {sheetsOf(248, 284, [
      [418, 468, "gate"], [472, 522, "magenta"], [525, 575, "magenta"], [580, 631, "magenta"], [636, 686, "magenta"],
      [690, 740, "magenta"], [772, 822, "magenta"], [827, 878, "magenta"], [881, 931, "magenta"], [931, 981, "stair"],
    ])}

    {sheetsOf(296, 332, [[485, 535, "section"], [544, 594, "section"], [601, 651, "section"], [655, 706, "section"]])}
    <rect x="657" y="338" width="51" height="3" fill={TEAL} opacity=".8" />
    <rect x="721.500" y="295.500" width="83" height="42" fill="none" stroke="#e00000" strokeWidth="1.200" />
    <Elevation x={729} y={300} w={27} h={26} light />
    <Elevation x={757} y={300} w={30} h={26} light />
    <line x1="729" x2="787" y1="326" y2="326" stroke="#eee" />

    <Elevation x={853} y={302} w={30} h={23} />
    <Elevation x={883} y={302} w={26} h={23} />
    <Elevation x={914} y={302} w={26} h={23} />
    <line x1="853" x2="942" y1="325" y2="325" stroke="#999" />
    <Elevation x={966} y={302} w={24} h={23} />
    <Elevation x={996} y={302} w={26} h={23} />
    <line x1="964" x2="1025" y1="325" y2="325" stroke="#999" />
    {sheetsOf(297, 333, [[1028, 1080, "empty"]])}

    {sheetsOf(342, 371, [[858, 900, "grey"], [900, 940, "orange"], [940, 981, "orange"]])}
    {sheetsOf(381, 393, [[858, 873, "tile"], [873, 892, "tile"], [892, 906, "tile"], [906, 923, "tile"]])}

    <text x="371" y="382" fontSize="19" fontFamily="Liberation Sans" fill="#ff00ff" stroke="#ff00ff" strokeWidth=".5" textLength="94" lengthAdjust="spacingAndGlyphs">THANG -KT.02</text>
    {sheetsOf(358, 382, [[503, 539, "tile"], [546, 581, "tile"]])}
    {sheetsOf(358, 392, [[590, 640, "mix"], [653, 703, "tile"]])}

    <text x="391" y="432" fontSize="19" fontFamily="Liberation Sans" fill="#ff00ff" stroke="#ff00ff" strokeWidth=".5" textLength="73" lengthAdjust="spacingAndGlyphs">WC - KT.03</text>
    {sheetsOf(411, 435, [[501, 537, "tile"], [539, 575, "tile"]])}
    {sheetsOf(411, 428, [[580, 606, "tile"], [614, 640, "tile"], [647, 673, "tile"], [679, 705, "tile"], [712, 738, "tile"], [742, 768, "tile"], [775, 801, "tile"]])}

    <text x="353" y="513" fontSize="19" fontFamily="Liberation Sans" fill="#ff00ff" stroke="#ff00ff" strokeWidth=".5" textLength="73" lengthAdjust="spacingAndGlyphs">CỬA KT-04.</text>
    {sheetsOf(494, 523, [[453, 493, "door"]])}
    {sheetsOf(487, 522, [[499, 549, "pale"], [552, 603, "pale"], [608, 658, "pale"], [661, 711, "pale"], [724, 774, "pale"], [778, 828, "blue"], [833, 884, "blue"]])}
    {sheetsOf(534, 553, [[564, 589, "tile"]])}
    {sheetsOf(539, 554, [[591, 610, "tile"], [612, 631, "tile"], [637, 656, "tile"], [659, 678, "tile"], [681, 700, "tile"], [703, 722, "tile"], [723, 742, "tile"], [743, 762, "tile"], [763, 782, "tile"], [783, 802, "tile"], [803, 822, "tile"], [825, 844, "tile"]])}
    {sheetsOf(536, 556, [[845, 859, "tile"]])}

    <text x="353" y="594" fontSize="19" fontFamily="Liberation Sans" fill="#ff00ff" stroke="#ff00ff" strokeWidth=".5" textLength="46" lengthAdjust="spacingAndGlyphs">CT - 05</text>
    {sheetsOf(569, 605, [[469, 519, "magenta"]])}
    <rect x="526.500" y="577.500" width="12" height="12" fill="#8a3a1a" stroke="#ddd" />

    {/* schedule notes */}
    {[584, 589, 594, 599, 604, 609, 614].map((y) => (
      <line key={y} x1="786" x2="871" y1={y} y2={y} stroke="#1d5fb0" />
    ))}
    {[[586, 856], [591, 846], [596, 881], [601, 846], [606, 844], [611, 840], [616, 834]].map(([y, x]) => (
      <line key={y} x1="788" x2={x} y1={y} y2={y} stroke="#ff00ff" strokeWidth="1.200" strokeDasharray="2.500 .6" />
    ))}

    <text x="353" y="671" fontSize="19" fontFamily="Liberation Sans" fill="#ff00ff" stroke="#ff00ff" strokeWidth=".5" textLength="46" lengthAdjust="spacingAndGlyphs">CT - 06</text>
    {sheetsOf(640, 676, [[423, 474, "blue"], [510, 561, "magenta"], [563, 614, "magenta"], [619, 669, "magenta"], [674, 724, "magenta"], [729, 779, "magenta"], [810, 861, "magenta"], [866, 916, "magenta"]])}

    <text x="353" y="738" fontSize="19" fontFamily="Liberation Sans" fill="#ff00ff" stroke="#ff00ff" strokeWidth=".5" textLength="46" lengthAdjust="spacingAndGlyphs">CT - 07</text>
    {sheetsOf(726, 762, [[472, 522, "pale"], [525, 575, "mix"], [577, 627, "blue"], [633, 683, "blue"], [687, 737, "blue"]])}
    <circle cx="494" cy="737" r="25.500" fill="none" stroke="#777" />
    <rect x="613" y="718" width="7" height="1.500" fill="#f0f000" />

    {RED_MARKS.map(([a, b, y, h]) => (
      <rect key={`${a}-${y}`} x={a} y={y} width={b - a} height={h} fill="#f00000" />
    ))}

    {/* view cube */}
    <circle cx="1123" cy="210" r="53.500" fill="none" stroke="#2b2b2b" strokeWidth="13" />
    {NOTE_LINES.map(([y, x, c]) => (
      <line key={y} x1="1085" x2={x} y1={y} y2={y} stroke={c} strokeWidth="1.200" strokeDasharray="2.500 .8" />
    ))}
    <rect x="1097" y="185" width="52" height="52" fill="#a8a8a8" opacity=".6" />
    <text x="1123" y="217" textAnchor="middle" fontSize="15" fontFamily="Liberation Sans" fill="#666">TOP</text>
    {[["N", 1123, 162], ["S", 1123, 274], ["W", 1068, 219], ["E", 1180, 219]].map(([t, x, y]) => (
      <text key={t as string} x={x as number} y={y as number} textAnchor="middle" fontSize="20" fontWeight="700" fontFamily="Liberation Sans" fill="#8c8c8c">{t}</text>
    ))}
    <rect x="1100" y="298" width="47" height="18" rx="4" fill="#5f5f66" />
    <text x="1115" y="311" textAnchor="middle" fontSize="11.500" fontFamily="Liberation Sans" fill="#2c2c2c">WCS</text>
    <path d="M1134 304h7l-3.500 5z" fill="#6c6c72" />

    {/* UCS icon */}
    <g stroke="#e4e4e4" fill="none" strokeWidth="1">
      <path d="M48.500 825V875.500H100" />
      <rect x="44.500" y="871.500" width="8" height="8" />
      <path d="M104 861l12 12M116 861l-12 12" />
      <path d="M51 810l5.500 6.500L62 810M56.500 816.500V824" />
    </g>

    {/* crosshair */}
    <g stroke="#f2f2f2" strokeWidth="1" fill="none">
      <path d="M1137.500 129V895M28 818.500H1206" />
      <rect x="1131.500" y="812.500" width="12" height="12" />
    </g>
  </CanvasSvg>
);

/* ---------- icon rows ---------- */
const LEFT_DOCK = ["line", "xline", "pline", "polygon", "rect", "arc", "circle", "cloud", "spline", "ellipse", "ellarc", "insert", "makeblock", "point", "hatch", "gradient", "region", "table", "mtext", "addsel"];
const RIGHT_DOCK = ["erase", "copyobj", "mirror", "offset", "array", "move", "rotate", "scale", "stretch", "trim", "extend", "breakp", "breakat", "join", "chamfer", "fillet", "blend", "explode"];
const MENU: [string, number][] = [["File", 42], ["Edit", 44], ["View", 49], ["Insert", 53], ["Format", 62], ["Tools", 53], ["Draw", 51], ["Dimension", 81], ["Modify", 62], ["Parametric", 81], ["Window", 68], ["Help", 44], ["Data View", 71], ["Express", 60]];

const Tools = ({ names, w, plain }: { names: string[]; w: number; plain?: boolean }) => (
  <ToolGroup $w={w} $plain={plain}>
    {names.map((n, i) => (n === "^" ? <Caret key={i} $color="#777" /> : <Icon key={i} name={n} />))}
  </ToolGroup>
);

const Cell = ({ w, icons, caret }: { w: number; icons: string[]; caret?: boolean }) => (
  <StatusCell $w={w}>
    {icons.map((n) => (
      <Icon key={n} name={n} size={17} />
    ))}
    {caret && <Caret $color="#eee" $size={4} />}
  </StatusCell>
);

export default function App() {
  return (
    <Page>
      <GlobalStyle />
      <Header>
        <AppButton>
          <svg width="25" height="28" viewBox="0 0 26 32">
            <path d="M13 1L25 30h-7L13 17 8 30H1z" fill="#c4161c" />
            <path d="M13 1l5 18-5-2z" fill="#e2343a" />
            <path d="M4 30l6-7h6l6 7h-4l-5-13-5 13z" fill="#8e0e12" />
          </svg>
          <Caret $color="#222" />
        </AppButton>
        <HeaderColumn>
          <TitleRow>
            <Qat>
              {["new", "open", "save", "saveas", "plot"].map((n) => (
                <QatButton key={n}><Icon name={n} size={18} /></QatButton>
              ))}
              <QatButton><Icon name="undo" size={17} /></QatButton>
              <QatButton $w={12}><Caret $color="#ccc" /></QatButton>
              <QatButton $w={26}><Icon name="redo" size={17} /></QatButton>
              <QatButton $w={12}><Caret $color="#ccc" /></QatButton>
              <QatButton $w={18}><Caret $color="#ddd" $size={4} /></QatButton>
            </Qat>
            <TitleText>Autodesk AutoCAD 2015    -Kien Truc -17.5.2016.DWG</TitleText>
            <SearchArrow />
            <SearchBox>Type a keyword or phrase</SearchBox>
            <IconSlot $w={26}>
              <svg width="19" height="18" viewBox="0 0 16 16"><path d="M2.500 2h3v4.500l1 7H1l1-7zM10.500 2h3v4.500l1 7H9l1-7z" fill="#e8e8e8" stroke="#2e2e2e" strokeWidth=".8" /><path d="M6 6h4" stroke="#2e2e2e" strokeWidth="2.200" /></svg>
            </IconSlot>
            <IconSlot $w={20}>
              <svg width="18" height="18" viewBox="0 0 16 16"><circle cx="8" cy="5" r="3.500" fill="#e6e6e6" stroke="#333" strokeWidth=".5" /><path d="M2 15c0-4 3-5 6-5s6 1 6 5z" fill="#e6e6e6" stroke="#333" strokeWidth=".5" /></svg>
            </IconSlot>
            <Spacer $w={3} />
            <SignIn>Sign In</SignIn>
            <Spacer $w={5} />
            <Caret $color="#bbb" />
            <IconSlot $w={34}>
              <svg width="18" height="16" viewBox="0 0 18 16"><path d="M1 1h5l3 5 3-5h5l-5 7 5 7h-5l-3-5-3 5H1l5-7z" fill="#5a7fd0" stroke="#23356e" strokeWidth=".7" /></svg>
            </IconSlot>
            <IconSlot $w={14}>
              <svg width="17" height="16" viewBox="0 0 16 16"><path d="M8 1l6.500 12H1.500z" fill="none" stroke="#b9c7ec" strokeWidth="1.800" /><path d="M3 13l5-3 5 3" stroke="#b9c7ec" strokeWidth="1.300" fill="none" /></svg>
            </IconSlot>
            <Spacer $w={8} />
            <Caret $color="#bbb" />
            <Spacer $w={10} />
            <IconSlot $w={32}>
              <svg width="18" height="18" viewBox="0 0 16 16"><circle cx="8" cy="8" r="7" fill="#f2f2f2" stroke="#2b5fae" strokeWidth="1.500" /><text x="8" y="12" textAnchor="middle" fontSize="11" fontWeight="700" fontFamily="Liberation Sans" fill="#2b5fae">?</text></svg>
            </IconSlot>
            <Caret $color="#bbb" />
            <WindowControls>
              <Minus size={13} color="#111" strokeWidth={3} />
              <svg width="14" height="14" viewBox="0 0 14 14"><path d="M4 1.500h8v7H9.500M1.500 5h8v7.500h-8z" fill="none" stroke="#222" strokeWidth="1.400" /></svg>
              <XIcon size={14} color="#111" strokeWidth={3} />
            </WindowControls>
            <Spacer $w={3} />
          </TitleRow>
          <MenuRow>
            {MENU.map(([label, w], i) => (
              <MenuItem key={label} $w={w} $first={i === 0}>{label}</MenuItem>
            ))}
            <WindowControls>
              <Minus size={13} color="#222" strokeWidth={3} />
              <svg width="14" height="14" viewBox="0 0 14 14"><path d="M4 1.500h8v7H9.500M1.500 5h8v7.500h-8z" fill="none" stroke="#333" strokeWidth="1.400" /></svg>
              <XIcon size={14} color="#222" strokeWidth={3} />
            </WindowControls>
            <Spacer $w={3} />
          </MenuRow>
        </HeaderColumn>
      </Header>

      <TabBar>
        <Tab $w={124}>nguon cac mat*</Tab>
        <Tab $w={156} $active>
          -Kien Truc -17.5.2016*
          <TabClose><XIcon size={11} strokeWidth={3} /></TabClose>
        </Tab>
        <NewTab><Plus size={9} strokeWidth={4} /></NewTab>
      </TabBar>

      <ToolRow $h={31} $pt={3} $pb={2}>
        <Toolbar $w={646}>
          <Grip />
          <Tools names={["new", "open", "save"]} w={75} />
          <Tools names={["plot", "preview", "publish", "print3d"]} w={99} />
          <Tools names={["cut", "copy", "paste", "match", "blockq"]} w={120} />
          <Tools names={["undo", "^", "redo", "^"]} w={78} />
          <ToolGroup $w={100}>
            <Hand size={18} color="#eee" fill="#eee" />
            <Icon name="zoomrt" />
            <Icon name="zoomwin" />
            <Icon name="zoomprev" />
          </ToolGroup>
          <Tools names={["propsp", "design", "palette", "sheet", "markup", "calc"]} w={142} />
          <Tools names={["help"]} w={22} plain />
        </Toolbar>
        <Toolbar $w={602}>
          <Grip />
          <IconSlot $w={26}><Icon name="textstyle" /></IconSlot>
          <Combo $w={118}><ComboLabel $pad={13}>text</ComboLabel><Caret $color="#111" $size={4} /></Combo>
          <IconSlot $w={31}><Icon name="dimstyle" /></IconSlot>
          <Combo $w={118}><ComboLabel $pad={12}>1-100-100</ComboLabel><Caret $color="#111" $size={4} /></Combo>
          <IconSlot $w={30}><Icon name="tablestyle" /></IconSlot>
          <Combo $w={119}><ComboLabel>Standard</ComboLabel><Caret $color="#111" $size={4} /></Combo>
          <IconSlot $w={31}><Icon name="mlstyle" /></IconSlot>
          <Combo $w={118}><ComboLabel $pad={13}>Standard</ComboLabel><Caret $color="#111" $size={4} /></Combo>
        </Toolbar>
      </ToolRow>

      <ToolRow $h={28} $pt={1} $pb={4}>
        <Toolbar $w={231}>
          <Grip />
          <Combo $w={175} $ml={2}><ComboLabel $pad={4}>AutoCAD Cla...AutoCAD 201</ComboLabel><Caret $color="#111" $size={4} /></Combo>
          <IconSlot $w={24}><Settings size={17} color="#e8e8e8" fill="#bbb" strokeWidth={2.4} /></IconSlot>
          <IconSlot $w={24}><Icon name="wslock" /></IconSlot>
        </Toolbar>
        <Toolbar $w={401}>
          <Grip />
          <IconSlot $w={24}><Icon name="layerprop" /></IconSlot>
          <Combo $w={299} $tight>
            <Icon name="bulb" size={16} />
            <Icon name="sun" size={16} />
            <Spacer $w={4} />
            <Icon name="vpfreeze" size={16} />
            <Icon name="lockopen" size={16} />
            <ColorSwatch />
            <ComboLabel $pad={8}>d</ComboLabel>
            <Caret $color="#111" $size={4} />
          </Combo>
          <IconSlot $w={23}><Icon name="layerprev" /></IconSlot>
          <IconSlot $w={23}><Icon name="layerstate" /></IconSlot>
          <IconSlot $w={23}><Icon name="layermatch" /></IconSlot>
        </Toolbar>
        <Toolbar $w={586}>
          <Spacer $w={9} />
          <Combo $w={150}><ColorSwatch /><ComboLabel>ByLayer</ComboLabel><Caret $color="#111" $size={4} /></Combo>
          <Combo $w={160} $ml={6}><LineSample $w={60} /><ComboLabel>ByLayer</ComboLabel><Caret $color="#111" $size={4} /></Combo>
          <Combo $w={125} $ml={6}><LineSample $w={34} /><ComboLabel>ByLayer</ComboLabel><Caret $color="#111" $size={4} /></Combo>
          <Combo $w={119} $ml={6} $off><ComboLabel $pad={5}>ByColor</ComboLabel><Caret $color="#aaa" $size={4} /></Combo>
        </Toolbar>
      </ToolRow>

      <Middle>
        <MainColumn>
          <Workspace>
            <SideStrip $w={28}>
              <DockToolbar>
                <DockGrip />
                {LEFT_DOCK.map((n) => (
                  <DockButton key={n}><Icon name={n} /></DockButton>
                ))}
              </DockToolbar>
            </SideStrip>
            <CanvasFrame>
              <CadDrawing />
              <ViewLabel>[−][Top][2D Wireframe]</ViewLabel>
            </CanvasFrame>
            <Scrollbar>
              <ScrollUp />
              <ScrollThumb />
              <ScrollDown />
            </Scrollbar>
            <SideStrip $w={30} $left={3}>
              <DockToolbar>
                <DockGrip />
                {RIGHT_DOCK.map((n) => (
                  <DockButton key={n}><Icon name={n} /></DockButton>
                ))}
              </DockToolbar>
              <DockToolbar $mt={3}>
                <DockGrip />
                {["ord1", "ord2", "ord3", "ord4"].map((n) => (
                  <DockButton key={n}><Icon name={n} /></DockButton>
                ))}
                <DockRule />
                {["textfront", "hatchback"].map((n) => (
                  <DockButton key={n}><Icon name={n} /></DockButton>
                ))}
              </DockToolbar>
            </SideStrip>
          </Workspace>
          <CommandLine>
            <CommandRail>
              <RailGrip />
              <RailButton $top={7}><XIcon size={13} strokeWidth={3} /></RailButton>
              <RailButton $top={9}><Wrench size={14} fill="#e8e8e8" /></RailButton>
            </CommandRail>
            <CommandBody>
              <CommandHistory>{"Specify corner of window, enter a scale factor (nX or nXP), or\n[All/Center/Dynamic/Extents/Previous/Scale/Window/Object] <real time>: _e"}</CommandHistory>
              <CommandInput>
                <PromptBox>{">_"}</PromptBox>
                <Caret $color="#888" />
                <CommandPlaceholder>Type a command</CommandPlaceholder>
              </CommandInput>
            </CommandBody>
          </CommandLine>
        </MainColumn>
        <PaletteBar>
          <Palette>
            <PaletteGrip />
            <PaletteTitle>Properties</PaletteTitle>
          </Palette>
        </PaletteBar>
      </Middle>

      <StatusBar>
        <ModelArea>
          <ModelTab>Model</ModelTab>
          <ModelPlus><Plus size={9} strokeWidth={4} /></ModelPlus>
          <ModelMore><Icon name="chevrons" size={13} /></ModelMore>
        </ModelArea>
        <StatusGroup>
          <StatusCell $w={242} $right $pad={6}>2429609.8710, -532174.0709, 0.0000</StatusCell>
          <StatusCell $w={50}>MODEL</StatusCell>
          <Cell w={64} icons={["grid", "snap"]} caret />
        </StatusGroup>
        <StatusGroup $ml={1}>
          <Cell w={24} icons={["infer"]} />
          <Cell w={25} icons={["dyn"]} />
          <Cell w={26} icons={["ortho"]} />
          <Cell w={39} icons={["polar"]} caret />
          <Cell w={40} icons={["iso"]} caret />
          <Cell w={24} icons={["isotrack"]} />
          <Cell w={37} icons={["osnap"]} caret />
          <Cell w={41} icons={["lweight"]} caret />
          <Cell w={25} icons={["transp"]} />
          <Cell w={25} icons={["cycle"]} />
          <Cell w={40} icons={["snap3d"]} caret />
        </StatusGroup>
        <StatusGroup $ml={2}>
          <Cell w={25} icons={["ducs"]} />
          <Cell w={37} icons={["cube"]} caret />
          <Cell w={40} icons={["gizmo"]} caret />
        </StatusGroup>
        <StatusGroup $ml={2}>
          <StatusCell $w={69}>
            <Icon name="annoA" />
            <Icon name="annoB" />
            <Icon name="annoC" />
          </StatusCell>
          <StatusCell $w={82}>1:1 / 100%<Caret $color="#eee" $size={4} /></StatusCell>
        </StatusGroup>
        <StatusGroup $ml={2}>
          <StatusCell $w={40}><Settings size={15} color="#bbb" fill="#bbb" /><Caret $color="#eee" $size={4} /></StatusCell>
          <StatusCell $w={25}><Plus size={17} color="#ccc" strokeWidth={2} /></StatusCell>
        </StatusGroup>
        <StatusGroup $ml={2}>
          <StatusCell $w={96} $start={6}><Icon name="ruler" size={17} />Decimal<Spacer $w={4} /><Caret $color="#eee" $size={4} /></StatusCell>
        </StatusGroup>
        <StatusGroup $ml={2}>
          <StatusCell $w={22}><Icon name="calcsm" size={14} /></StatusCell>
        </StatusGroup>
      </StatusBar>
    </Page>
  );
}
